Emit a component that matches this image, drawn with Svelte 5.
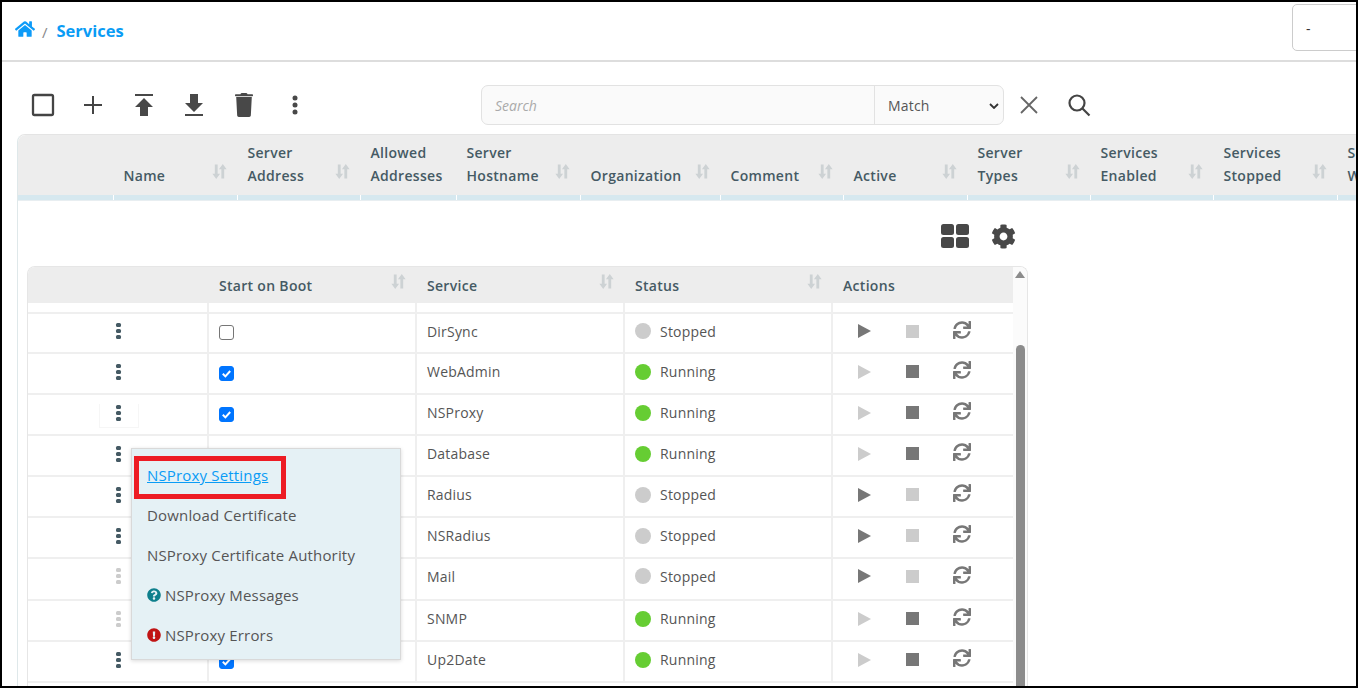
<script>
  const cols = [
    { w: 95, lines: [] , none: true },
    { w: 124, lines: ['Name'] },
    { w: 123, lines: ['Server', 'Address'] },
    { w: 96, lines: ['Allowed', 'Addresses'], nosort: true },
    { w: 124, lines: ['Server', 'Hostname'] },
    { w: 140, lines: ['Organization'] },
    { w: 123, lines: ['Comment'] },
    { w: 124, lines: ['Active'] },
    { w: 123, lines: ['Server', 'Types'] },
    { w: 123, lines: ['Services', 'Enabled'] },
    { w: 124, lines: ['Services', 'Stopped'] },
    { w: 124, lines: ['Services', 'Warning'], nosort: true }
  ];
  const rows = [
    { name: 'DirSync', on: false, run: false, h: 40 },
    { name: 'WebAdmin', on: true, run: true, h: 41 },
    { name: 'NSProxy', on: true, run: true, h: 41, focus: true },
    { name: 'Database', on: true, run: true, h: 41, faint: true },
    { name: 'Radius', on: false, run: false, h: 41 },
    { name: 'NSRadius', on: false, run: false, h: 41 },
    { name: 'Mail', on: false, run: false, h: 42, off: true },
    { name: 'SNMP', on: true, run: true, h: 41, off: true },
    { name: 'Up2Date', on: true, run: true, h: 41 }
  ];
  const sync = 'M440.65 12.57l4 82.77A247.16 247.16 0 0 0 255.83 8C134.73 8 33.91 94.92 12.29 209.82A12 12 0 0 0 24.09 224h49.05a12 12 0 0 0 11.67-9.26 175.91 175.91 0 0 1 317-56.94l-101.46-4.86a12 12 0 0 0-12.57 12v47.41a12 12 0 0 0 12 12H500a12 12 0 0 0 12-12V12a12 12 0 0 0-12-12h-47.37a12 12 0 0 0-11.98 12.57zM255.83 432a175.61 175.61 0 0 1-146-77.8l101.8 4.87a12 12 0 0 0 12.57-12v-47.4a12 12 0 0 0-12-12H12a12 12 0 0 0-12 12V500a12 12 0 0 0 12 12h47.35a12 12 0 0 0 12-12.6l-4.15-82.57A247.17 247.17 0 0 0 255.83 504c121.11 0 221.93-86.92 243.55-201.82a12 12 0 0 0-11.8-14.18h-49.05a12 12 0 0 0-11.67 9.26A175.86 175.86 0 0 1 255.83 432z';
</script>

{#snippet sort()}
  <svg class="sort" viewBox="0 0 16 17"><path d="M3 1h3v10h2.6L4.500 16.500 .4 11H3zM10 16h3V6h2.600L11.500.5 7.400 6H10z" /></svg>
{/snippet}

<div class="frame">
  <header class="top">
    <svg class="home" viewBox="0 0 576 512"><path d="M280.37 148.26L96 300.11V464a16 16 0 0 0 16 16l112.06-.29a16 16 0 0 0 15.92-16V368a16 16 0 0 1 16-16h64a16 16 0 0 1 16 16v95.64a16 16 0 0 0 16 16.05L464 480a16 16 0 0 0 16-16V300L295.67 148.26a12.19 12.19 0 0 0-15.3 0zM571.6 251.47L488 182.56V44.05a12 12 0 0 0-12-12h-56a12 12 0 0 0-12 12v72.61L318.47 43a48 48 0 0 0-61 0L4.34 251.47a12 12 0 0 0-1.6 16.9l25.5 31A12 12 0 0 0 45.15 301l235.22-193.74a12.19 12.19 0 0 1 15.3 0L530.9 301a12 12 0 0 0 16.9-1.6l25.5-31a12 12 0 0 0-1.7-16.93z" /></svg>
    <span class="slash">/</span>
    <span class="crumb">Services</span>
    <div class="picker">-</div>
  </header>

  <div class="toolbar">
    <div class="tools">
      <button aria-label="Select"><svg width="24" height="24" viewBox="0 0 24 24"><rect x="2" y="2" width="20" height="20" rx="1.500" class="ol" /></svg></button>
      <button aria-label="Add"><svg width="22" height="22" viewBox="0 0 22 22"><path d="M11 2v18M2 11h18" class="ln" /></svg></button>
      <button aria-label="Upload"><svg width="20" height="24" viewBox="0 0 20 24"><path d="M1 1h18v2H1zM10 5l9 9h-5v9H6v-9H1z" class="fl" /></svg></button>
      <button aria-label="Download"><svg width="20" height="24" viewBox="0 0 20 24"><path d="M6 1h8v9h5l-9 9-9-9h5zM1 21h18v2H1z" class="fl" /></svg></button>
      <button aria-label="Delete"><svg width="18" height="24" viewBox="0 0 448 597"><path class="fl" d="M432 32H312l-9.400-18.700A24 24 0 0 0 281.100 0H166.800a23.720 23.720 0 0 0-21.400 13.300L136 32H16A16 16 0 0 0 0 48v16a16 16 0 0 0 16 16h416a16 16 0 0 0 16-16V48a16 16 0 0 0-16-16zM30 100l24 460a40 40 0 0 0 40 37h260a40 40 0 0 0 40-37l24-460z" /></svg></button>
      <button aria-label="More"><svg width="6" height="20" viewBox="0 0 6 20"><circle cx="3" cy="3" r="2.500" class="fl" /><circle cx="3" cy="10" r="2.500" class="fl" /><circle cx="3" cy="17" r="2.500" class="fl" /></svg></button>
    </div>
    <div class="search">
      <span class="ph">Search</span>
      <span class="match">Match<svg width="10" height="6" viewBox="0 0 10 6"><path d="M1 1l4 4 4-4" /></svg></span>
    </div>
    <button class="act" aria-label="Clear"><svg width="20" height="20" viewBox="0 0 20 20"><path d="M2 2l16 16M18 2L2 18" /></svg></button>
    <button class="act find" aria-label="Find"><svg width="24" height="24" viewBox="0 0 24 24"><circle cx="10" cy="10" r="7.500" /><path d="M15.500 15.500l7 7" /></svg></button>
  </div>

  <section class="outer">
    <div class="ohead">
      {#each cols as c}
        <div class="oth" style="width:{c.w}px">
          {#if !c.none}
            <span class="lbl">{#each c.lines as l}<span>{l}</span>{/each}</span>
            {#if !c.nosort}{@render sort()}{/if}
          {/if}
        </div>
      {/each}
    </div>
    <div class="bluebar">
      {#each cols as c, i}<i style="width:{i === 0 ? c.w + 1 : c.w}px"></i>{/each}
    </div>

    <div class="panel">
      <div class="panel-tools">
        <svg width="28" height="24" viewBox="0 0 28 24" class="dk"><rect width="13" height="11" rx="2.500" /><rect x="15" width="13" height="11" rx="2.500" /><rect y="13" width="13" height="11" rx="2.500" /><rect x="15" y="13" width="13" height="11" rx="2.500" /></svg>
        <svg width="25" height="25" viewBox="0 0 512 512" class="dk"><path d="M487.400 315.700l-42.600-24.600c4.300-23.200 4.300-47 0-70.200l42.600-24.600c4.900-2.800 7.100-8.600 5.500-14-11.100-35.600-30-67.800-54.700-94.600-3.800-4.100-10-5.100-14.800-2.300L380.800 110c-17.900-15.400-38.500-27.300-60.800-35.100V25.800c0-5.600-3.900-10.500-9.400-11.700-36.700-8.200-74.300-7.800-109.200 0-5.500 1.200-9.400 6.100-9.400 11.700V75c-22.200 7.900-42.800 19.800-60.800 35.100L88.700 85.500c-4.900-2.800-11-1.900-14.800 2.300-24.700 26.700-43.600 58.900-54.700 94.600-1.700 5.400.6 11.200 5.500 14L67.300 221c-4.300 23.200-4.300 47 0 70.200l-42.600 24.600c-4.900 2.800-7.100 8.600-5.500 14 11.100 35.600 30 67.800 54.700 94.600 3.800 4.100 10 5.100 14.800 2.300l42.600-24.600c17.900 15.400 38.500 27.300 60.800 35.100v49.200c0 5.600 3.900 10.500 9.400 11.700 36.700 8.200 74.300 7.800 109.200 0 5.500-1.200 9.400-6.100 9.400-11.700v-49.200c22.200-7.900 42.800-19.800 60.800-35.100l42.600 24.600c4.900 2.800 11 1.900 14.800-2.300 24.700-26.700 43.600-58.900 54.700-94.600 1.500-5.500-.7-11.300-5.600-14.100zM256 336c-44.100 0-80-35.900-80-80s35.900-80 80-80 80 35.900 80 80-35.900 80-80 80z" /></svg>
      </div>

      <div class="inner">
        <div class="main">
          <div class="ihead grid">
            <div></div>
            <div class="ith"><span>Start on Boot</span>{@render sort()}</div>
            <div class="ith"><span>Service</span>{@render sort()}</div>
            <div class="ith"><span>Status</span>{@render sort()}</div>
            <div class="ith"><span>Actions</span></div>
          </div>
          <div class="grid stub"><div></div><div></div><div></div><div></div><div></div></div>
          {#each rows as r}
            <div class="grid row" class:tall={r.h === 42} style="height:{r.h}px">
              <div class="c dots-cell">
                <span class="dots" class:off={r.off} class:focus={r.focus}><b></b><b></b><b></b></span>
              </div>
              <div class="c cbcell"><span class="cb" class:on={r.on} class:faint={r.faint}>{#if r.on}<svg viewBox="0 0 13 13"><path d="M2.800 6.800l2.600 2.600 4.800-5.400" /></svg>{/if}</span></div>
              <div class="c txt">{r.name}</div>
              <div class="c txt"><span class="led" class:run={r.run}></span>{r.run ? 'Running' : 'Stopped'}</div>
              <div class="c acts">
                <svg class="play" class:dim={r.run} width="13" height="14" viewBox="0 0 13 14"><path d="M0 0l13 7-13 7z" /></svg>
                <span class="stop" class:dim={!r.run}></span>
                <svg class="sync" width="18" height="18" viewBox="0 0 512 512"><path d={sync} /></svg>
              </div>
            </div>
          {/each}
        </div>
        <div class="scroll">
          <span class="up"></span>
          <span class="thumb"></span>
        </div>
      </div>

      <nav class="menu">
        <a class="mi link" href="#settings">NSProxy Settings</a>
        <span class="mi">Download Certificate</span>
        <span class="mi">NSProxy Certificate Authority</span>
        <span class="mi"><svg class="q" width="14" height="14" viewBox="0 0 512 512"><path d="M504 256c0 136.997-111.043 248-248 248S8 392.997 8 256C8 119.083 119.043 8 256 8s248 111.083 248 248zM262.655 90c-54.497 0-89.255 22.957-116.549 63.758-3.536 5.286-2.353 12.415 2.715 16.258l34.699 26.31c5.205 3.947 12.621 3.008 16.665-2.122 17.864-22.658 30.113-35.797 57.303-35.797 20.429 0 45.698 13.148 45.698 32.958 0 14.976-12.363 22.667-32.534 33.976C247.128 238.528 216 254.941 216 296v4c0 6.627 5.373 12 12 12h56c6.627 0 12-5.373 12-12v-1.333c0-28.462 83.186-29.647 83.186-106.667 0-58.002-60.165-102-116.531-102zM256 338c-25.365 0-46 20.635-46 46 0 25.364 20.635 46 46 46s46-20.636 46-46c0-25.365-20.635-46-46-46z" /></svg>NSProxy Messages</span>
        <span class="mi"><svg class="x" width="14" height="14" viewBox="0 0 512 512"><path d="M504 256c0 136.997-111.043 248-248 248S8 392.997 8 256C8 119.083 119.043 8 256 8s248 111.083 248 248zm-248 50c-25.405 0-46 20.595-46 46s20.595 46 46 46 46-20.595 46-46-20.595-46-46-46zm-43.673-165.346l7.418 136c.347 6.364 5.609 11.346 11.982 11.346h48.546c6.373 0 11.635-4.982 11.982-11.346l7.418-136c.375-6.874-5.098-12.654-11.982-12.654h-63.383c-6.884 0-12.356 5.780-11.981 12.654z" /></svg>NSProxy Errors</span>
        <span class="callout"></span>
      </nav>
    </div>
  </section>
</div>

<style>
  :global(body) { margin: 0; background: #fff; overflow: hidden; }
  * { box-sizing: border-box; }
  .frame {
    width: 1358px; height: 688px; border: 2px solid #000; overflow: hidden;
    font-family: "Open Sans", "Noto Sans", sans-serif; font-size: 14px; color: #555; background: #fff;
  }
  button { all: unset; display: flex; align-items: center; justify-content: center; }

  .top { height: 60px; border-bottom: 2px solid #ddd; display: flex; align-items: center; padding-left: 13px; }
  .home { width: 20px; height: 18px; fill: #0d9bf8; margin-top: -5px; }
  .slash { color: #888; font-size: 15px; margin-left: 7px; margin-top: 2px; }
  .crumb { color: #0a9cf5; font-size: 16.500px; font-weight: 700; margin-left: 9px; margin-top: -2px; }
  .picker {
    margin-left: auto; margin-right: -40px; width: 104px; height: 47px; margin-top: -7px;
    border: 1px solid #ccc; border-radius: 5px; padding: 14px 13px; color: #333; font-size: 14px;
  }

  .toolbar { height: 72px; display: flex; align-items: center; padding-left: 16px; padding-top: 21px; padding-bottom: 8px; }
  .tools { display: flex; width: 302px; }
  .tools button { width: 50.330px; }
  .ol { fill: none; stroke: #444; stroke-width: 2.300; }
  .ln { fill: none; stroke: #444; stroke-width: 2; }
  .fl { fill: #484848; }
  .search {
    margin-left: 161px; width: 523px; height: 40px; flex: none; display: flex; align-items: center;
    background: #fafafa; border: 1px solid #e2e2e2; border-radius: 7px;
  }
  .ph { flex: 1; padding: 2px 0 0 13px; font-style: italic; color: #aaa; font-size: 14px; }
  .match {
    width: 129px; height: 100%; border-left: 1px solid #e2e2e2; display: flex; align-items: center;
    justify-content: space-between; padding: 2px 4px 0 13px; color: #555; letter-spacing: .2px;
  }
  .match svg path { fill: none; stroke: #333; stroke-width: 1.800; }
  .act svg { fill: none; stroke: #666; stroke-width: 1.800; }
  .act { width: 50px; }
  .find svg { stroke: #444; stroke-width: 2.200; }

  .outer { margin-left: 15px; width: 1500px; border-left: 1px solid #dfe8ea; border-top: 1px solid #e4e4e4; border-top-left-radius: 8px; position: relative; }
  .ohead { display: flex; height: 60px; background: #ededed; border-top-left-radius: 8px; }
  .oth { display: flex; justify-content: space-between; align-items: flex-end; padding: 0 10px 0 10.500px; flex: none; }
  .lbl { display: flex; flex-direction: column; font-weight: 600; color: #455a64; line-height: 23px; padding-bottom: 8px; white-space: nowrap; letter-spacing: .3px; }
  .sort { width: 15px; height: 17px; fill: #cdd2d4; flex: none; margin-bottom: 15px; }
  .bluebar { display: flex; height: 6px; background: #fff; border-bottom: 1px solid #e8eef1; }
  .bluebar i { display: block; flex: none; background: #d6e8ef; border-right: 1px solid #fff; height: 5px; }

  .panel { padding: 23px 0 0 9px; width: 1001px; box-sizing: content-box; position: relative; }
  .panel-tools { height: 42px; padding-right: 12px; display: flex; justify-content: flex-end; align-items: flex-start; gap: 22px; }
  .dk { fill: #484848; }

  .inner { display: flex; width: 1001px; border: 1px solid #e6e6e6; border-bottom: 0; border-radius: 8px 8px 0 0; overflow: hidden; height: 430px; }
  .main { width: 985px; flex: none; }
  .grid { display: grid; grid-template-columns: 181px 208px 208px 208px 180px; }
  .ihead { height: 36px; background: #ededed; }
  .ith { display: flex; justify-content: space-between; align-items: center; padding: 0 11px 0 10px; font-weight: 600; color: #455a64; letter-spacing: .3px; }
  .ith .sort { margin-bottom: 8px; }
  .stub { height: 11px; border-bottom: 2px solid #efefef; }
  .stub div { border-right: 2px solid #efefef; }
  .stub div:last-child { border-right: 0; }
  .row { border-bottom: 2px solid #efefef; }
  .c { border-right: 2px solid #efefef; display: flex; align-items: center; padding-left: 10px; padding-bottom: 4px; }
  .c:last-child { border-right: 0; }
  .cbcell { padding-bottom: 1px; }
  .txt { color: #555; font-size: 14px; letter-spacing: .2px; }
  .tall .c { padding-bottom: 6px; }
  .dots-cell { justify-content: center; padding: 0; }
  .tall .dots-cell { padding-bottom: 2px; }
  .dots { display: flex; flex-direction: column; gap: 2px; align-items: center; margin: 2px 0 0 2px; width: 40px; height: 24px; padding-top: 1px; }
  .dots b { display: block; width: 5px; height: 4px; border-radius: 1.500px; background: #455a64; }
  .dots.off b { background: #ccc; }
  .dots.focus { border: 1px solid #f6f6f6; border-top: 0; }

  .cb { width: 15px; height: 15px; border: 1px solid #767676; border-radius: 3px; display: block; background: #fff; }
  .cb.on { background: #0075ff; border-color: #0075ff; }
  .cb.faint { background: #9fc6f3; border-color: #9fc6f3; }
  .cb svg { display: block; width: 13px; height: 13px; fill: none; stroke: #fff; stroke-width: 2; }
  .led { width: 16px; height: 16px; border-radius: 50%; background: #ccc; margin-right: 9px; flex: none; }
  .led.run { background: #66cd33; }
  .acts { padding-left: 25px; }
  .play { fill: #777; flex: none; }
  .play.dim { fill: #ccc; }
  .stop { width: 13px; height: 13px; background: #777; margin-left: 35px; flex: none; }
  .stop.dim { background: #ccc; }
  .sync { fill: #777; margin-left: 34px; margin-top: -3px; flex: none; }

  .scroll { flex: 1; background: #fbfbfb; display: flex; flex-direction: column; align-items: center; }
  .up { width: 0; height: 0; border-left: 5px solid transparent; border-right: 5px solid transparent; border-bottom: 7px solid #8c8c8c; margin-top: 4px; }
  .thumb { width: 9px; flex: none; height: 400px; background: #8c8c8c; border-radius: 5px 5px 0 0; margin-top: 67px; }

  .menu {
    position: absolute; left: 113px; top: 247px; width: 270px; height: 212px;
    background: #e5f1f5; border: 1px solid #d9d9d9; box-shadow: 0 1px 4px rgba(0,0,0,.15);
    display: flex; flex-direction: column; padding: 6px 0 0 15px; font-size: 15px; color: #555; letter-spacing: .17px;
  }
  .mi { height: 40px; display: flex; align-items: center; white-space: nowrap; }
  .mi svg { margin-right: 4px; flex: none; }
  .link { color: #0a9cf5; text-decoration: underline; }
  .q { fill: #0e7f8c; }
  .x { fill: #c01414; }
  .callout { position: absolute; left: 2px; top: 7px; width: 152px; height: 43px; border: 5px solid #ed1c24; }
</style>
